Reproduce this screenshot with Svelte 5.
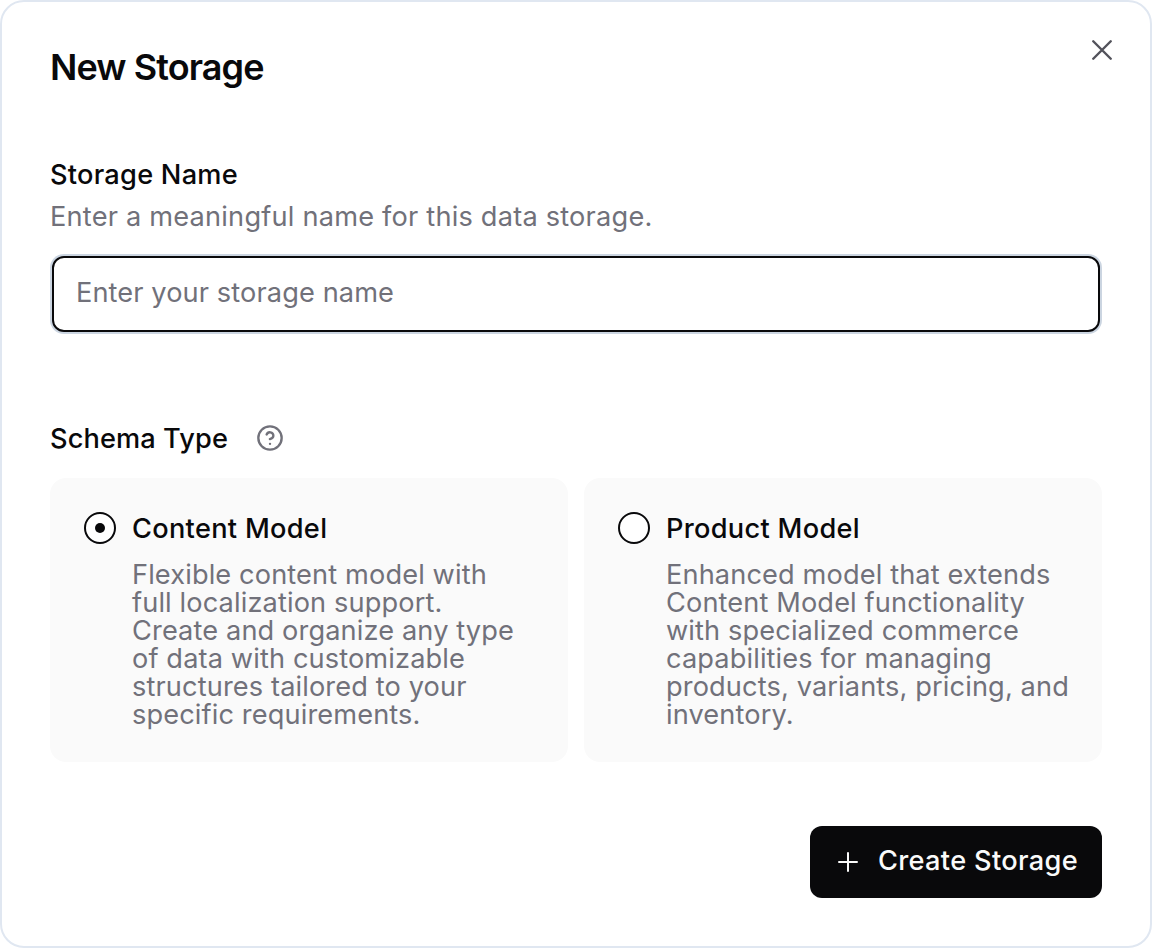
<script>
	let schema = $state('content');
	const schemas = [
		{
			id: 'content',
			name: 'Content Model',
			text: 'Flexible content model with\nfull localization support.\nCreate and organize any type\nof data with customizable\nstructures tailored to your\nspecific requirements.'
		},
		{
			id: 'product',
			name: 'Product Model',
			text: 'Enhanced model that extends Content Model functionality with specialized commerce capabilities for managing products, variants, pricing, and inventory.'
		}
	];
</script>

<div class="dialog">
	<header class="head">
		<h2>New Storage</h2>
		<button class="close" aria-label="Close">
			<svg width="28" height="28" viewBox="0 0 24 24" fill="none" stroke="#52525b" stroke-width="2.1" stroke-linecap="round">
				<path d="M4.5 4.5 19.5 19.5M19.5 4.5 4.5 19.5" />
			</svg>
		</button>
	</header>

	<div class="field">
		<label for="storage-name">Storage Name</label>
		<p class="hint">Enter a meaningful name for this data storage.</p>
		<input id="storage-name" type="text" placeholder="Enter your storage name" />
	</div>

	<div class="schema">
		<div class="schema-label">
			<span>Schema Type</span>
			<svg width="28" height="28" viewBox="0 0 24 24" fill="none" stroke="#71717a" stroke-width="2" stroke-linecap="round" stroke-linejoin="round">
				<circle cx="12" cy="12" r="10" />
				<path d="M9.1 9a3 3 0 0 1 5.8 1c0 2-3 3-3 3" />
				<path d="M12 17h.01" />
			</svg>
		</div>
		<div class="options">
			{#each schemas as s}
				<label class="option">
					<input type="radio" name="schema" value={s.id} bind:group={schema} />
					<span class="radio"></span>
					<span class="option-body">
						<span class="option-name">{s.name}</span>
						<span class="option-text">{s.text}</span>
					</span>
				</label>
			{/each}
		</div>
	</div>

	<footer class="foot">
		<button class="create">
			<svg width="24" height="24" viewBox="0 0 24 24" fill="none" stroke="#fafafa" stroke-width="2" stroke-linecap="round">
				<path d="M12 3v18M3 12h18" />
			</svg>
			Create Storage
		</button>
	</footer>
</div>

<style>
	:global(body) {
		margin: 0;
		background: #fff;
	}

	.dialog {
		box-sizing: border-box;
		width: 1152px;
		height: 948px;
		padding: 45px 48px 48px;
		background: #fff;
		border: 2px solid #e0e7f1;
		border-radius: 24px;
		font-family: Inter, sans-serif;
		color: #09090b;
		display: flex;
		flex-direction: column;
	}

	.head {
		display: flex;
		justify-content: space-between;
		align-items: flex-start;
		height: 40px;
	}

	h2 {
		margin: 0;
		font-size: 36px;
		line-height: 40px;
		font-weight: 600;
		letter-spacing: -0.9px;
	}

	.close {
		margin: -11px -14px 0 0;
		padding: 0;
		width: 28px;
		height: 28px;
		border: 0;
		background: none;
	}

	.close svg,
	.schema-label svg,
	.create svg {
		display: block;
		flex: none;
	}

	.field {
		margin-top: 68px;
	}

	label[for='storage-name'],
	.schema-label span {
		font-size: 27.2px;
		line-height: 40px;
		font-weight: 500;
		letter-spacing: 0.25px;
	}

	.schema-label span {
		margin-top: 2px;
		letter-spacing: 0.1px;
	}

	label[for='storage-name'] {
		display: block;
	}

	.hint {
		margin: 2px 0 0;
		font-size: 27.2px;
		line-height: 40px;
		letter-spacing: 0.2px;
		color: #71717a;
	}

	input[type='text'] {
		box-sizing: border-box;
		display: block;
		width: calc(100% - 4px);
		height: 76px;
		margin: 19px 2px 0;
		padding: 0 22px 4px;
		font: 400 27.2px Inter, sans-serif;
		letter-spacing: 0.1px;
		border: 2px solid #09090b;
		border-radius: 12px;
		outline: none;
		box-shadow: 0 0 0 2px #cbd5e1;
	}

	input::placeholder {
		color: #71717a;
	}

	.schema {
		margin-top: 86px;
	}

	.schema-label {
		display: flex;
		align-items: center;
		gap: 28px;
		height: 40px;
	}

	.options {
		display: grid;
		grid-template-columns: 1fr 1fr;
		gap: 16px;
		margin-top: 20px;
	}

	.option {
		position: relative;
		display: flex;
		gap: 16px;
		padding: 33px 32px 32px 34px;
		background: #fafafa;
		border-radius: 16px;
		height: 284px;
		box-sizing: border-box;
	}

	.option input {
		position: absolute;
		opacity: 0;
		width: 0;
		height: 0;
	}

	.radio {
		box-sizing: border-box;
		flex: none;
		position: relative;
		width: 32px;
		height: 32px;
		margin-top: 1px;
		border: 2px solid #09090b;
		border-radius: 50%;
		background: #fff;
	}

	.option input:checked + .radio::after {
		content: '';
		position: absolute;
		inset: 9px;
		border-radius: 50%;
		background: #09090b;
	}

	.option-body {
		display: flex;
		flex-direction: column;
		gap: 14px;
	}

	.option-name {
		font-size: 27.2px;
		line-height: 36px;
		font-weight: 500;
		letter-spacing: 0.3px;
	}

	.option-text {
		font-size: 27.2px;
		line-height: 28px;
		letter-spacing: 0.12px;
		color: #71717a;
		white-space: pre-line;
	}

	.foot {
		margin-top: auto;
		display: flex;
		justify-content: flex-end;
	}

	.create {
		display: inline-flex;
		align-items: center;
		gap: 18px;
		height: 72px;
		padding: 0 24px 4px 26px;
		background: #09090b;
		color: #fafafa;
		border: 0;
		border-radius: 12px;
		font: 500 27.2px Inter, sans-serif;
		letter-spacing: 0.33px;
	}

	.create svg {
		margin-top: 4px;
	}
</style>
